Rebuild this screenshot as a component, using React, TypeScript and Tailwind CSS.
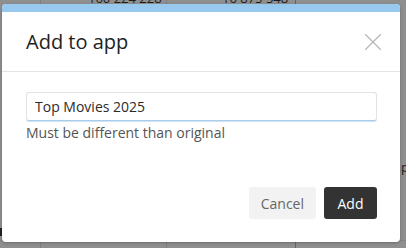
import { X } from 'lucide-react';

export default function App() {
  return (
    <div
      className="relative w-[406px] h-[248px] overflow-hidden bg-[#8f8f8f]"
      style={{ fontFamily: '"Open Sans", "Liberation Sans", sans-serif' }}
    >
      {/* Table behind the overlay */}
      <div className="absolute inset-0 pointer-events-none">
        <div className="absolute left-[40px] top-0 bottom-0 w-px bg-[#7f7f7f]" />
        <div className="absolute left-[166px] top-0 bottom-0 w-px bg-[#7f7f7f]" />
        <div className="absolute left-[295px] top-0 bottom-0 w-px bg-[#2f6fb8]" />
        <div className="absolute left-[296px] top-[170px] right-0 h-px bg-[#828282]" />
        <div className="absolute left-0 top-[240px] right-0 h-px bg-[#848484]" />
        <span className="absolute left-[88px] top-[-11px] text-[13px] text-[#1c1c1c]">160 224 228</span>
        <span className="absolute left-[222px] top-[-11px] text-[13px] text-[#1c1c1c]">16 875 548</span>
        <span className="absolute left-[401px] top-[158px] text-[13px] text-[#1c1c1c]">p</span>
        <div className="absolute left-0 top-[228px] w-[2px] h-[8px] bg-[#222]" />
      </div>

      {/* Dialog */}
      <div className="relative ml-[2px] mt-[4px] w-[398px] h-[238px] rounded-[4px] bg-white overflow-hidden flex flex-col shadow-[0_1px_3px_rgba(0,0,0,0.25)]">
        <div className="h-[8px] bg-[#97c9ee]" />
        <div className="h-[60px] flex items-center justify-between pl-[24px] pr-[12px] border-b border-[#e3e3e3]">
          <h2 className="text-[20px] leading-[28px] text-[#222] pt-[1px]">Add to app</h2>
          <X className="w-[30px] h-[30px] text-[#b3b3b3]" strokeWidth={0.9} />
        </div>
        <div className="flex flex-col flex-1 pl-[24px] pr-[23px] pt-[20px]">
          <input
            readOnly
            value="Top Movies 2025"
            className="h-[29px] w-full rounded-[3px] border border-[#e2e2e2] border-b-[#a9cdea] px-[8px] text-[14px] text-[#2b2b2b] outline-none shadow-[0_1px_0_#cfe3f4]"
          />
          <p className="mt-[2px] text-[14px] leading-[20px] text-[#555]">Must be different than original</p>
          <div className="flex justify-end gap-[8px] mt-[44px]">
            <button className="h-[32px] px-[12px] rounded-[3px] bg-[#f2f2f2] text-[14px] text-[#666]">Cancel</button>
            <button className="h-[32px] w-[53px] rounded-[3px] bg-[#333] text-[14px] text-white">Add</button>
          </div>
        </div>
      </div>
    </div>
  );
}
